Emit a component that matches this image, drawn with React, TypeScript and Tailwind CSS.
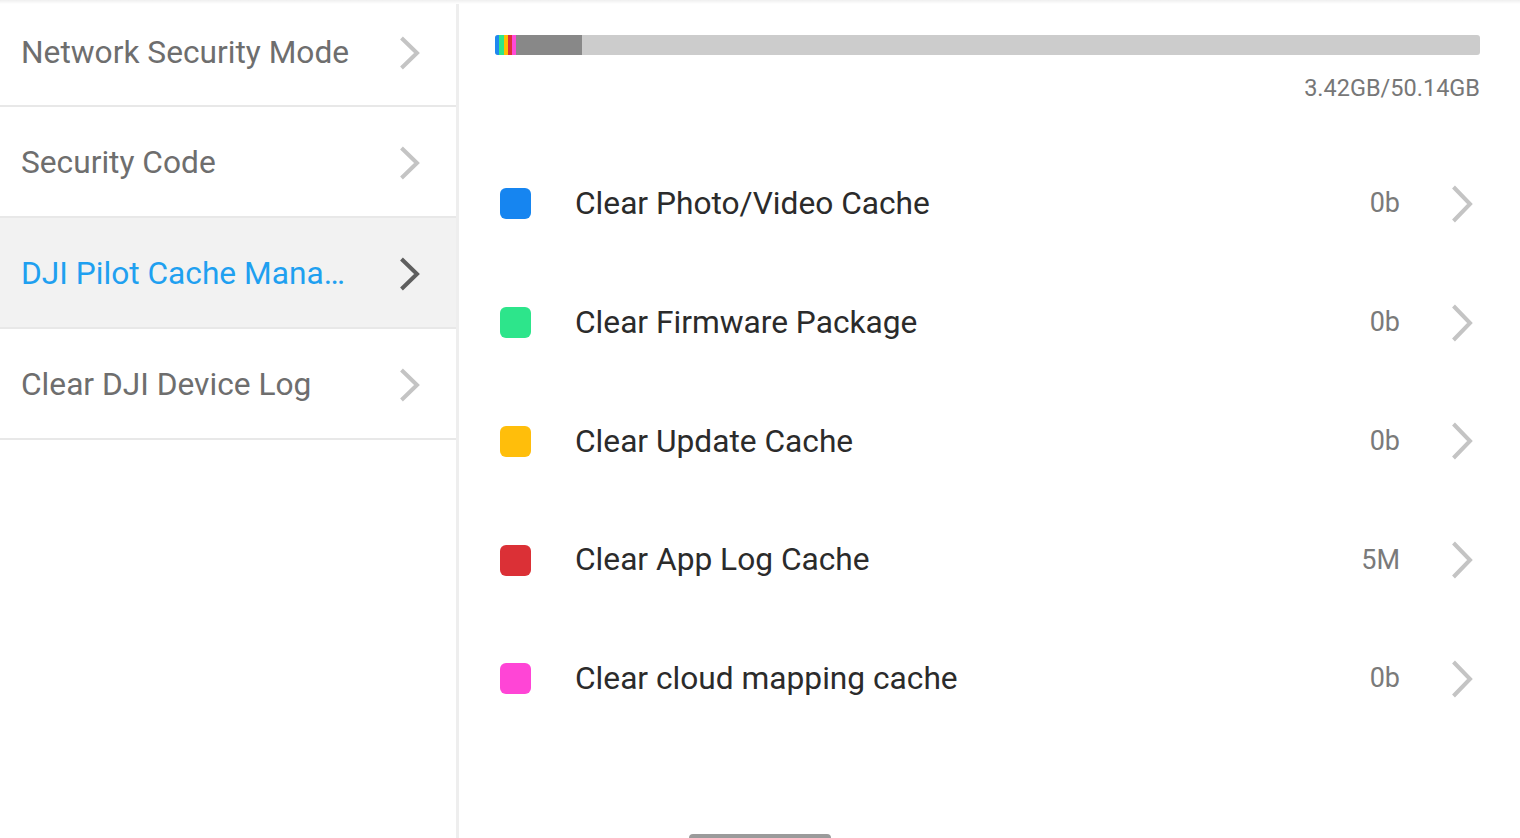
const font = { fontFamily: "Roboto, 'Liberation Sans', sans-serif" }

const menu = [
  { label: "Network Security Mode", first: true },
  { label: "Security Code" },
  { label: "DJI Pilot Cache Mana…", active: true },
  { label: "Clear DJI Device Log" },
]

const caches = [
  { label: "Clear Photo/Video Cache", size: "0b", color: "bg-[#1685f0]" },
  { label: "Clear Firmware Package", size: "0b", color: "bg-[#2de58b]" },
  { label: "Clear Update Cache", size: "0b", color: "bg-[#ffbe0b]" },
  { label: "Clear App Log Cache", size: "5M", color: "bg-[#db3036]" },
  { label: "Clear cloud mapping cache", size: "0b", color: "bg-[#ff45d6]" },
]

function Chevron({ className, w, h }: { className: string; w: number; h: number }) {
  return (
    <svg width={w} height={h} viewBox={`0 0 ${w} ${h}`} className={className} fill="none">
      <polyline
        points={`2.5,2 ${w - 3},${h / 2} 2.5,${h - 2}`}
        stroke="currentColor"
        strokeWidth={4}
        strokeLinejoin="miter"
      />
    </svg>
  )
}

export default function App() {
  return (
    <div className="relative flex h-[838px] w-full overflow-hidden bg-white" style={font}>
      <div className="pointer-events-none absolute inset-x-0 top-0 h-[4px] bg-gradient-to-b from-[#efefef] to-white" />

      {/* sidebar */}
      <div className="w-[459px] shrink-0 border-r-[3px] border-[#eeeeee]">
        {menu.map((item) => (
          <div
            key={item.label}
            className={`flex items-center justify-between border-b-2 border-[#e8e8e8] pl-[21px] pr-[36px] ${
              item.first ? "h-[107px]" : "h-[111px] pt-[3px]"
            } ${item.active ? "bg-[#f2f2f2]" : ""}`}
          >
            <span
              className={`whitespace-nowrap text-[31.7px] leading-none ${
                item.active ? "text-[#1fa0f0]" : "text-[#6e6e6e]"
              }`}
            >
              {item.label}
            </span>
            <Chevron w={21} h={34} className={item.active ? "text-[#5f5f5f]" : "text-[#c4c4c4]"} />
          </div>
        ))}
      </div>

      {/* cache panel */}
      <div className="flex flex-1 flex-col pl-[36px] pr-[40px] pt-[35px]">
        <div className="flex h-[20px] w-full overflow-hidden rounded-[3px] bg-[#cccccc]">
          <div className="w-[4px] bg-[#1e88f0]" />
          <div className="w-[5px] bg-[#2ee68a]" />
          <div className="w-[4px] bg-[#ffbf00]" />
          <div className="w-[4px] bg-[#e0303a]" />
          <div className="w-[4px] bg-[#ff49d6]" />
          <div className="w-[66px] bg-[#888888]" />
        </div>
        <div className="mt-[19px] text-right text-[23.5px] leading-[28px] text-[#777777]">3.42GB/50.14GB</div>

        <div className="mt-[42.5px] flex flex-col">
          {caches.map((c) => (
            <div key={c.label} className="flex h-[118.75px] items-center pl-[5px] pr-[7px]">
              <div className={`h-[31px] w-[31px] rounded-[6px] ${c.color}`} />
              <span className="ml-[44px] flex-1 whitespace-nowrap text-[31.7px] leading-none text-[#2b2b2b]">
                {c.label}
              </span>
              <span className="text-[27px] leading-none text-[#7a7a7a]">{c.size}</span>
              <Chevron w={22} h={38} className="ml-[51px] text-[#c4c4c4]" />
            </div>
          ))}
        </div>
      </div>

      <div className="absolute bottom-0 left-1/2 h-[4px] w-[142px] -translate-x-1/2 rounded-t-full bg-[#9b9b9b]" />
    </div>
  )
}
